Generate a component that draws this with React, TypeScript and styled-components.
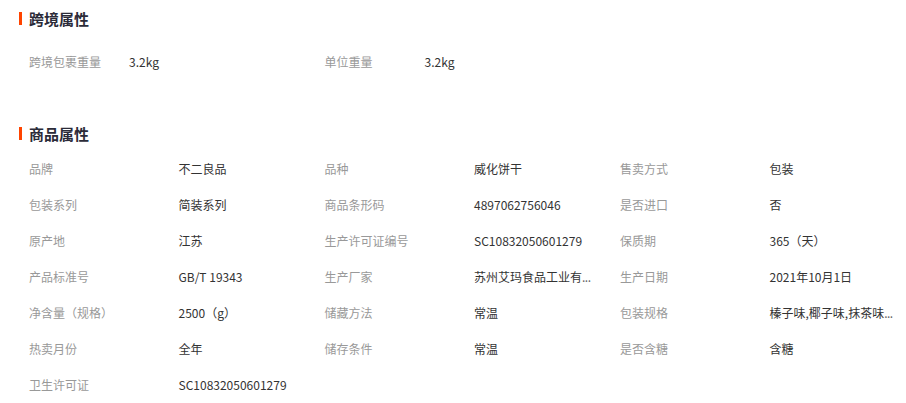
import React from "react";
import styled, { createGlobalStyle } from "styled-components";

const Global = createGlobalStyle`
  html, body { margin: 0; padding: 0; background: #fff; }
  body { font-family: "Noto Sans CJK SC", "Noto Sans", sans-serif; }
`;

const Page = styled.div`
  width: 906px;
  height: 403px;
  overflow: hidden;
  display: flex;
  flex-direction: column;
  background: #fff;
`;

const Section = styled.section<{ $top: number }>`
  margin-top: ${(p) => p.$top}px;
  display: flex;
  flex-direction: column;
`;

const Title = styled.h3`
  margin: 0;
  height: 36px;
  display: flex;
  align-items: center;
  gap: 7px;
  padding-left: 19px;
  font-size: 15px;
  font-weight: 700;
  color: #2b2b38;
  &::before {
    content: "";
    width: 3px;
    height: 13px;
    background: #ff4400;
  }
`;

const Grid = styled.div<{ $pad: number }>`
  display: grid;
  grid-template-columns: repeat(3, 295.5px);
  padding-left: 29px;
  padding-top: ${(p) => p.$pad}px;
`;

const Item = styled.div<{ $label: number }>`
  display: grid;
  grid-template-columns: ${(p) => p.$label}px auto;
  height: 36px;
  align-items: center;
  font-size: 12px;
  line-height: 36px;
`;

const Label = styled.span`
  color: #999;
  white-space: nowrap;
`;

const Value = styled.span`
  color: #333;
  white-space: nowrap;
`;

const Dots = styled.span`
  color: #666;
  letter-spacing: -0.5px;
`;

type Row = [string, string, boolean?];

const cross: Row[] = [
  ["跨境包裹重量", "3.2kg"],
  ["单位重量", "3.2kg"],
];

const product: Row[] = [
  ["品牌", "不二良品"],
  ["品种", "威化饼干"],
  ["售卖方式", "包装"],
  ["包装系列", "简装系列"],
  ["商品条形码", "4897062756046"],
  ["是否进口", "否"],
  ["原产地", "江苏"],
  ["生产许可证编号", "SC10832050601279"],
  ["保质期", "365（天）"],
  ["产品标准号", "GB/T 19343"],
  ["生产厂家", "苏州艾玛食品工业有", true],
  ["生产日期", "2021年10月1日"],
  ["净含量（规格）", "2500（g）"],
  ["储藏方法", "常温"],
  ["包装规格", "榛子味,椰子味,抹茶味", true],
  ["热卖月份", "全年"],
  ["储存条件", "常温"],
  ["是否含糖", "含糖"],
  ["卫生许可证", "SC10832050601279"],
];

export default function App() {
  return (
    <>
      <Global />
      <Page>
        <Section $top={0}>
          <Title>跨境属性</Title>
          <Grid $pad={8}>
            {cross.map(([l, v]) => (
              <Item key={l} $label={100}>
                <Label>{l}</Label>
                <Value>{v}</Value>
              </Item>
            ))}
          </Grid>
        </Section>
        <Section $top={35}>
          <Title>商品属性</Title>
          <Grid $pad={0}>
            {product.map(([l, v, cut]) => (
              <Item key={l} $label={149.5}>
                <Label>{l}</Label>
                <Value>
                  {v}
                  {cut && <Dots>...</Dots>}
                </Value>
              </Item>
            ))}
          </Grid>
        </Section>
      </Page>
    </>
  );
}
